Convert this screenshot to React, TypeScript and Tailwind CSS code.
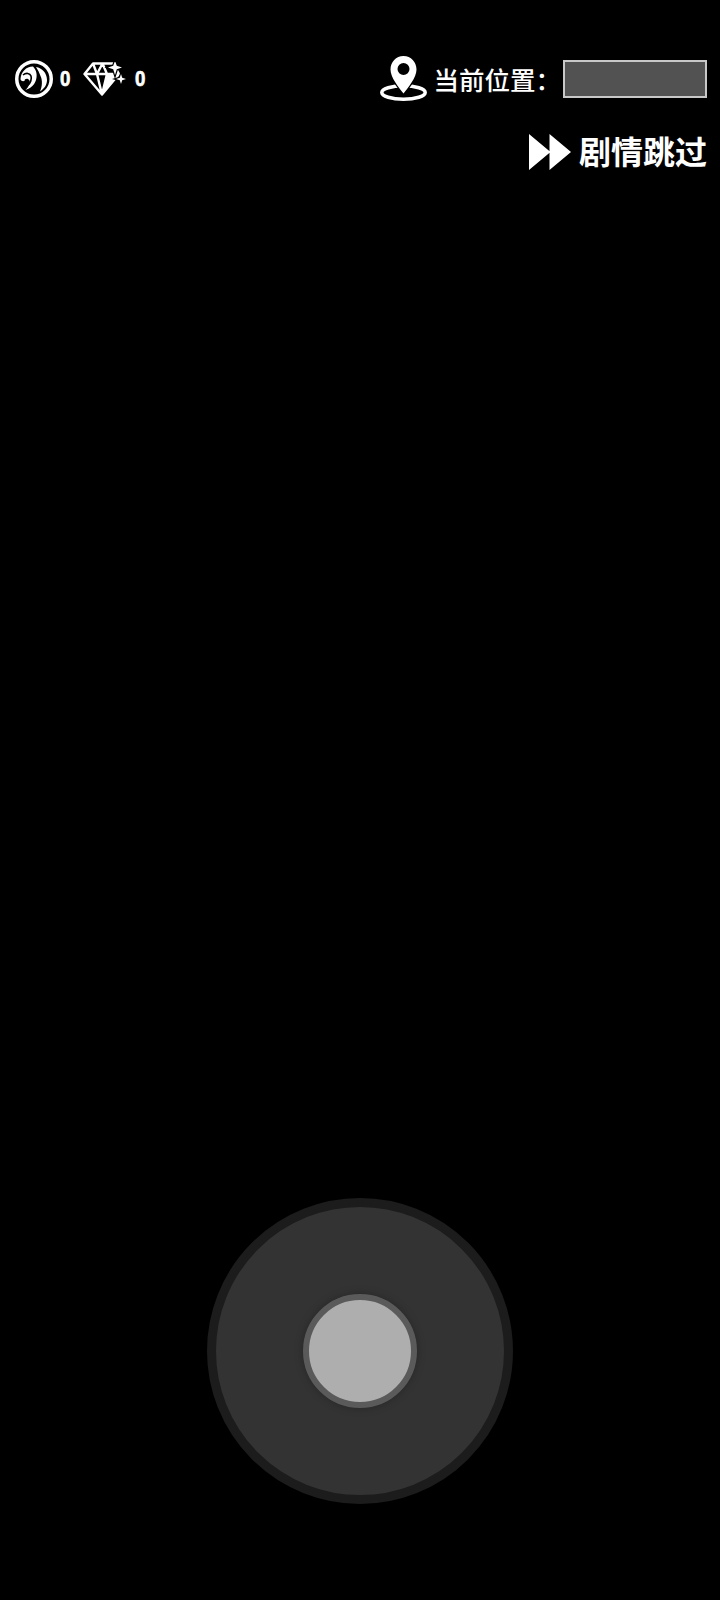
const cjk = "font-['Noto_Sans_CJK_SC','Noto_Sans',sans-serif]"

function CoinIcon() {
  return (
    <svg width="38" height="38" viewBox="0 0 38 38" className="shrink-0">
      <circle cx="19" cy="19" r="17.250" fill="none" stroke="#fff" strokeWidth="3.500" />
      <path
        d="M5.500 19C6 12 11 6.500 18 6.500c3.500 3.500 4.500 8.500 3 13.500-1.500 5-5.500 8.500-10.500 10 3.500-3.500 5-7 4-9.500-1.500-2.500-5-2-5 .5-2.500.5-4-.5-4-2z"
        fill="#fff"
      />
      <path d="M21 7c6 1 11 6 11 13 0 5-3 9-7 11.500 2.500-5.500 2.500-11.500.5-15.500-1-3-2.500-6-4.500-9z" fill="#fff" />
      <path d="M8 15c3-2.500 7-2 8 1 1 3-.5 7-3 9" fill="none" stroke="#000" strokeWidth="1.600" />
    </svg>
  )
}

function DiamondIcon() {
  return (
    <svg width="44" height="34" viewBox="0 0 44 34" className="shrink-0">
      <path d="M24 12h12L19 33z" fill="#fff" />
      <path
        d="M10 1.500h20L36 12 19 32.500 1.500 12z M1.500 12H36 M10 1.500L14 12l5 20.500L24 12 M14 12l5.500-10.500L24 12"
        fill="none"
        stroke="#fff"
        strokeWidth="2.400"
        strokeLinejoin="round"
      />
      <path d="M32 -1l1.800 4.700L39 5.500l-5.200 1.800L32 13l-1.800-5.700L25 5.500l5.200-1.800z" fill="#fff" stroke="#000" strokeWidth="2.400" paintOrder="stroke" />
      <path d="M38 12l1.200 3.800L43 17l-3.800 1.200L38 22l-1.200-3.800L33 17l3.800-1.200z" fill="#fff" stroke="#000" strokeWidth="2.400" paintOrder="stroke" />
    </svg>
  )
}

function LocationIcon() {
  return (
    <svg width="47" height="45" viewBox="0 0 47 45" className="shrink-0">
      <ellipse cx="23.500" cy="36.500" rx="21.700" ry="6.700" fill="none" stroke="#fff" strokeWidth="3.500" />
      <path
        fillRule="evenodd"
        d="M23.500 0C16 0 10.500 6 10.500 13.500c0 8 8 17.500 13 24 5-6.500 13-16 13-24C36.500 6 31 0 23.500 0zm0 7a6 6 0 1 1 0 12 6 6 0 0 1 0-12z"
        fill="#fff"
        stroke="#000"
        strokeWidth="3"
        paintOrder="stroke"
      />
    </svg>
  )
}

function SkipIcon() {
  return (
    <svg width="42" height="36" viewBox="0 0 42 36" className="shrink-0">
      <path d="M0 0l21.500 18L0 36z M20.500 0L42 18 20.500 36z" fill="#fff" />
    </svg>
  )
}

function Count() {
  return (
    <span className="inline-block font-['Liberation_Sans',sans-serif] text-[22px] leading-none font-bold text-white scale-x-[.85] [-webkit-text-stroke:0.7px_white]">
      0
    </span>
  )
}

export default function App() {
  return (
    <div className={`h-[1600px] bg-black flex flex-col ${cjk}`}>
      <div className="flex items-center justify-between pt-[56px] pl-[15px] pr-[13px]">
        <div className="flex items-center">
          <CoinIcon />
          <div className="ml-[6px] mr-[12px]"><Count /></div>
          <DiamondIcon />
          <div className="ml-[7px]"><Count /></div>
        </div>
        <div className="flex items-center">
          <LocationIcon />
          <span className="ml-[6px] text-[25.500px] leading-none font-medium text-white">当前位置：</span>
          <div className="ml-[2px] w-[144px] h-[38px] bg-[#525252] border-2 border-[#c8c8c8]" />
        </div>
      </div>
      <div className="flex items-center justify-end mt-[33px] pr-[13px]">
        <SkipIcon />
        <span className="ml-[8px] pb-[4px] text-[32px] leading-none font-bold text-white">剧情跳过</span>
      </div>
      <div className="mt-[1028px] flex justify-center">
        <div className="w-[306px] h-[306px] rounded-full bg-[#333333] border-[9px] border-[#1c1c1c] flex items-center justify-center">
          <div className="w-[114px] h-[114px] rounded-full bg-[#aeaeae] border-[6px] border-[#5a5a5a] shadow-[0_0_8px_rgba(0,0,0,0.25)]" />
        </div>
      </div>
    </div>
  )
}
